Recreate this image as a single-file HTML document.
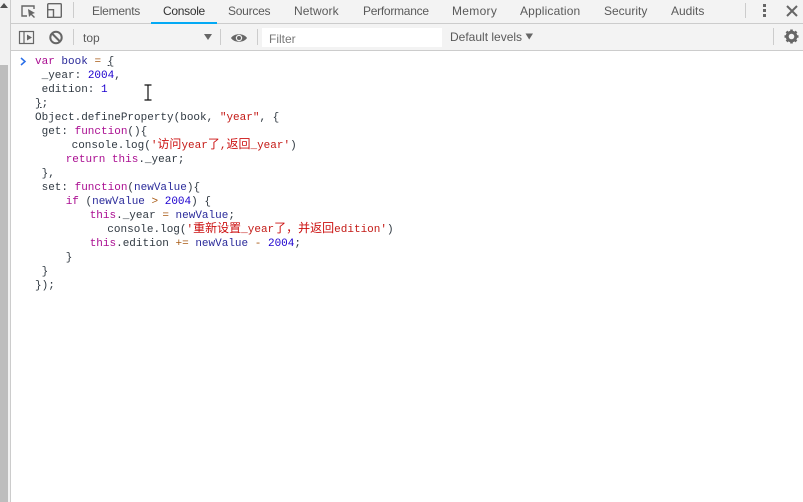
<!DOCTYPE html>
<html><head><meta charset="utf-8"><style>
html,body{margin:0;padding:0;background:#fff;width:803px;height:502px;overflow:hidden}
.a{position:absolute}
#t1{left:11px;top:0;width:792px;height:23px;background:#f3f3f3;border-bottom:1px solid #ccc}
#t2{left:11px;top:24px;width:792px;height:26px;background:#f3f3f3;border-bottom:1px solid #ccc}
.tab,.ui{position:absolute;font:12px "Liberation Sans",sans-serif;color:#5a5a5a;white-space:pre;line-height:16px}
.sep{position:absolute;width:1px;background:#ccc}
.l{position:absolute;font:11px/14px "Liberation Mono","Noto Sans CJK SC",monospace;color:#303942;white-space:pre}
.k{color:#aa0d91}.v{color:#2a2a9a}.n{color:#1c00cf}.s{color:#c41a16}.o{color:#a85a14}
.c{font:12px/12px "Noto Sans CJK SC",sans-serif;color:#cc1111}
</style></head><body>
<div class="a" style="left:0;top:0;width:8px;height:65px;background:#f1f1f1"></div>
<div class="a" style="left:0;top:65px;width:8px;height:437px;background:#bdbdbd"></div>
<div class="a" style="left:8px;top:0;width:2px;height:502px;background:#f1f1f1"></div>
<div class="a" style="left:10px;top:0;width:1px;height:502px;background:#ccc"></div>
<svg class="a" style="left:0;top:3px" width="8" height="5"><path d="M0 5L4 0L8 5Z" fill="#505050"/></svg>
<div class="a" id="t1"></div><div class="a" id="t2"></div>
<svg class="a" style="left:20px;top:2px" width="45" height="18" fill="none" stroke="#666" stroke-width="1.4">
<path d="M7 14H2V4H14V7"/><path d="M8 7L9 15L11 13L14 16L15 15L12 12L15 11Z" fill="#666" stroke="none"/>
<rect x="27.700" y="1.700" width="13.600" height="13.600" rx="1"/><rect x="22" y="7.700" width="11.500" height="7.600" fill="#f3f3f3" stroke="none"/><path d="M27.700 7.700H33.500V15.300H27.700Z"/>
</svg>
<div class="sep" style="left:73px;top:2px;height:16px"></div>
<div class="tab" style="left:92px;top:3px;letter-spacing:-.25px">Elements</div>
<div class="tab" style="left:163px;top:3px;color:#333;letter-spacing:-.3px">Console</div>
<div class="tab" style="left:228px;top:3px;letter-spacing:-.25px">Sources</div>
<div class="tab" style="left:294px;top:3px;letter-spacing:.1px">Network</div>
<div class="tab" style="left:363px;top:3px;letter-spacing:-.27px">Performance</div>
<div class="tab" style="left:452px;top:3px;letter-spacing:.3px">Memory</div>
<div class="tab" style="left:520px;top:3px;letter-spacing:.15px">Application</div>
<div class="tab" style="left:604px;top:3px">Security</div>
<div class="tab" style="left:671px;top:3px">Audits</div>
<div class="a" style="left:151px;top:22px;width:66px;height:2px;background:#03a9f4"></div>
<div class="sep" style="left:745px;top:3px;height:15px"></div>
<svg class="a" style="left:760px;top:2px" width="40" height="18" fill="#666">
<rect x="3" y="2" width="3" height="3"/><rect x="3" y="7" width="3" height="3"/><rect x="3" y="12" width="3" height="3"/>
<path d="M27 4L37 14M37 4L27 14" stroke="#666" stroke-width="2" fill="none"/>
</svg>
<svg class="a" style="left:18px;top:29px" width="50" height="18">
<rect x="1.500" y="2.500" width="14" height="12" fill="none" stroke="#666" stroke-width="1.200"/>
<path d="M6 3V14" stroke="#666" stroke-width="1.200"/><path d="M9 5.500L14 8.500L9 11.500Z" fill="#666"/>
<circle cx="38" cy="8.500" r="5.700" fill="none" stroke="#666" stroke-width="2"/><path d="M34 4.500L42 12.500" stroke="#666" stroke-width="2"/>
</svg>
<div class="sep" style="left:73px;top:29px;height:16px"></div>
<div class="ui" style="left:83px;top:30px">top</div>
<svg class="a" style="left:203px;top:33px" width="10" height="8"><path d="M1 1H9L5 7Z" fill="#666"/></svg>
<div class="sep" style="left:220px;top:29px;height:16px"></div>
<svg class="a" style="left:230px;top:31px" width="18" height="14"><path d="M1 7C4 2 14 2 17 7C14 12 4 12 1 7Z" fill="#666"/><circle cx="9" cy="7" r="3.200" fill="#f3f3f3"/><circle cx="9" cy="7" r="2" fill="#666"/></svg>
<div class="sep" style="left:257px;top:29px;height:16px"></div>
<div class="a" style="left:262px;top:28px;width:180px;height:19px;background:#fff"></div>
<div class="ui" style="left:269px;top:31px;color:#777">Filter</div>
<div class="ui" style="left:450px;top:29px">Default levels</div>
<svg class="a" style="left:525px;top:33px" width="9" height="7"><path d="M0.500 0.500H8L4.200 6.500Z" fill="#666"/></svg>
<div class="sep" style="left:773px;top:28px;height:17px"></div>
<svg class="a" style="left:783px;top:28px" width="17" height="17"><circle cx="8.500" cy="8.500" r="4.300" fill="none" stroke="#666" stroke-width="3"/><path d="M8.500 1.500V15.500M1.500 8.500H15.500M3.500 3.500L13.500 13.500M13.500 3.500L3.500 13.500" stroke="#666" stroke-width="2.600" stroke-dasharray="2.500 9"/></svg>
<svg class="a" style="left:20px;top:57px" width="7" height="9"><path d="M1 1L5 4.500L1 8" fill="none" stroke="#2a6fe8" stroke-width="1.500"/></svg>
<div class="l" style="left:35px;top:55px"><span class="k">var</span> <span class="v">book</span> <span class="o">=</span> <u>{</u></div>
<div class="l" style="left:41.600px;top:69px">_year: <span class="n">2004</span>,</div>
<div class="l" style="left:41.600px;top:83px">edition: <span class="n">1</span></div>
<div class="l" style="left:35px;top:97px"><u>}</u>;</div>
<div class="l" style="left:35px;top:111px">Object.defineProperty(book, <span class="s">"year"</span>, {</div>
<div class="l" style="left:41.600px;top:125px">get: <span class="k">function</span>(){</div>
<div class="l" style="left:71.600px;top:138px">console.log(<span class="s">'<span class="c">访问</span>year<span class="c">了</span>,<span class="c">返回</span>_year'</span>)</div>
<div class="l" style="left:65.700px;top:153px"><span class="k">return</span> <span class="k">this</span>._year;</div>
<div class="l" style="left:41.600px;top:167px">},</div>
<div class="l" style="left:41.600px;top:181px">set: <span class="k">function</span>(<span class="v">newValue</span>){</div>
<div class="l" style="left:65.700px;top:195px"><span class="k">if</span> (<span class="v">newValue</span> <span class="o">&gt;</span> <span class="n">2004</span>) {</div>
<div class="l" style="left:89.700px;top:209px"><span class="k">this</span>._year <span class="o">=</span> <span class="v">newValue</span>;</div>
<div class="l" style="left:107.300px;top:222px">console.log(<span class="s">'<span class="c">重新设置</span>_year<span class="c">了，并返回</span>edition'</span>)</div>
<div class="l" style="left:89.700px;top:237px"><span class="k">this</span>.edition <span class="o">+=</span> <span class="v">newValue</span> <span class="o">-</span> <span class="n">2004</span>;</div>
<div class="l" style="left:65.700px;top:251px">}</div>
<div class="l" style="left:41.600px;top:265px">}</div>
<div class="l" style="left:35px;top:279px">});</div>
<svg class="a" style="left:143px;top:84px" width="10" height="17"><path d="M1.500 1H8.500M5 1V16M1.500 16H8.500" fill="none" stroke="#111" stroke-width="1.200"/></svg>
</body></html>
